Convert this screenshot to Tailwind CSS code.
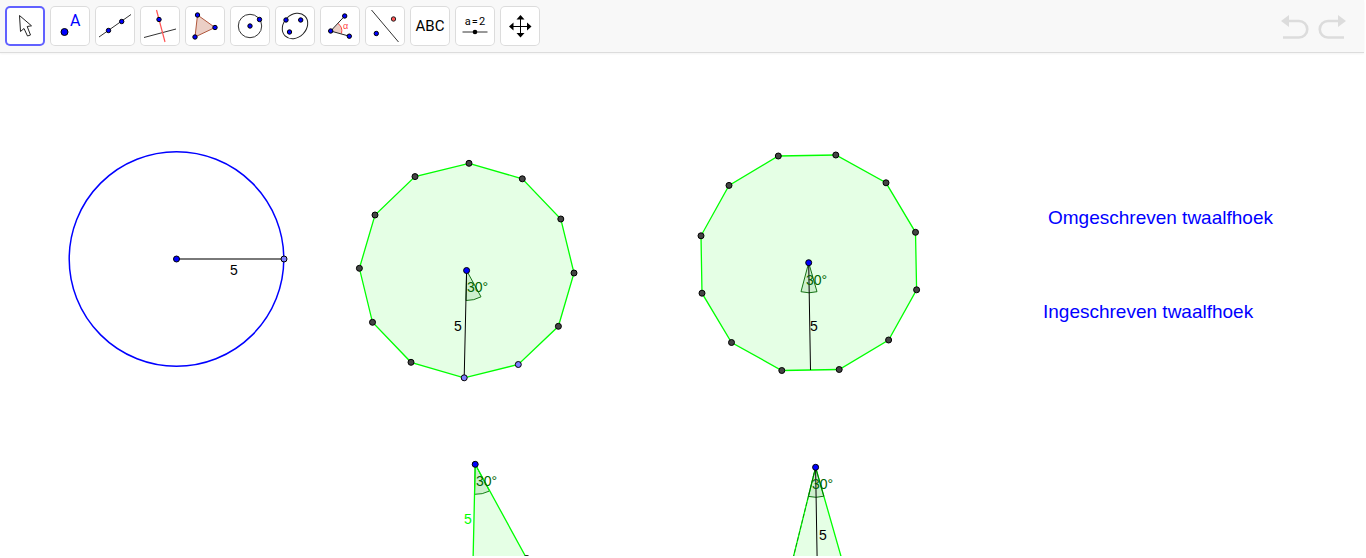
<!DOCTYPE html>
<html lang="nl">
<head>
  <meta charset="UTF-8">
  <meta name="viewport" content="width=device-width, initial-scale=1.0">
  <title>Twaalfhoek</title>
  <script src="https://cdn.jsdelivr.net/npm/@tailwindcss/browser@4"></script>
</head>
<body class="bg-white">
  <div class="flex flex-col h-screen pr-0.5 pb-0.5">

    <!-- Toolbar -->
    <header class="flex items-center justify-between shrink-0 bg-[#f8f8f8] border-b border-[#dcdcdc] shadow-xs pl-[5px] pr-4 py-1.5">
      <div class="flex gap-[5px]">
        <button aria-label="Move" class="size-10 rounded-[5px] bg-white inset-ring-2 inset-ring-[#6161ff]">
          <svg class="size-10" viewBox="0 0 40 40">
            <path d="M14.5 9.5L15.5 25.5L19 22.5L22.5 30L25.5 29L22.2 20.5L26.5 19.8z" fill="#fff" stroke="#222"/>
          </svg>
        </button>
        <button aria-label="Point" class="size-10 rounded-[5px] bg-white inset-ring inset-ring-[#dcdcdc]">
          <svg class="size-10" viewBox="0 0 40 40">
            <circle cx="14.5" cy="26" r="3.5" fill="#00f" stroke="#000"/>
            <text x="20" y="20" class="font-[Roboto,sans-serif] text-[16px]" fill="#00f">A</text>
          </svg>
        </button>
        <button aria-label="Line" class="size-10 rounded-[5px] bg-white inset-ring inset-ring-[#dcdcdc]">
          <svg class="size-10" viewBox="0 0 40 40">
            <path d="M4 31L36 8.5" stroke="#333"/>
            <g fill="#00f" stroke="#000"><circle cx="13.5" cy="24.5" r="2.2"/><circle cx="26.7" cy="15.5" r="2.2"/></g>
          </svg>
        </button>
        <button aria-label="Perpendicular line" class="size-10 rounded-[5px] bg-white inset-ring inset-ring-[#dcdcdc]">
          <svg class="size-10" viewBox="0 0 40 40">
            <path d="M4 31.5L36 23" stroke="#333"/>
            <path d="M16.5 4L25 36" stroke="#f55" stroke-width="1.2"/>
            <circle cx="19" cy="13.5" r="2.2" fill="#00f" stroke="#000"/>
          </svg>
        </button>
        <button aria-label="Polygon" class="size-10 rounded-[5px] bg-white inset-ring inset-ring-[#dcdcdc]">
          <svg class="size-10" viewBox="0 0 40 40">
            <path d="M12.5 9L30 21.5L10 31z" fill="#ebcfc6" stroke="#b0573c"/>
            <g fill="#00f" stroke="#000"><circle cx="12.5" cy="9" r="2.2"/><circle cx="30" cy="21.5" r="2.2"/><circle cx="10" cy="31" r="2.2"/></g>
          </svg>
        </button>
        <button aria-label="Circle" class="size-10 rounded-[5px] bg-white inset-ring inset-ring-[#dcdcdc]">
          <svg class="size-10" viewBox="0 0 40 40">
            <circle cx="20" cy="20" r="11.7" fill="none" stroke="#333"/>
            <g fill="#00f" stroke="#000"><circle cx="20" cy="20" r="2.2"/><circle cx="29.5" cy="13.5" r="2.2"/></g>
          </svg>
        </button>
        <button aria-label="Ellipse" class="size-10 rounded-[5px] bg-white inset-ring inset-ring-[#dcdcdc]">
          <svg class="size-10" viewBox="0 0 40 40">
            <ellipse cx="20" cy="20" rx="14" ry="11.3" transform="rotate(-45 20 20)" fill="none" stroke="#222"/>
            <g fill="#00f" stroke="#000"><circle cx="11" cy="14" r="2.2"/><circle cx="25.7" cy="14" r="2.2"/><circle cx="14.5" cy="26" r="2.2"/></g>
          </svg>
        </button>
        <button aria-label="Angle" class="size-10 rounded-[5px] bg-white inset-ring inset-ring-[#dcdcdc]">
          <svg class="size-10" viewBox="0 0 40 40">
            <path d="M11 25L18 17.5Q23 21 21.5 27.5z" fill="#ebcfc6"/>
            <path d="M18 17.5Q23 21 21.5 27.5" fill="none" stroke="#f44"/>
            <path d="M24.7 10L10.7 25L29.3 30.2" fill="none" stroke="#222"/>
            <g fill="#00f" stroke="#000"><circle cx="24.7" cy="10" r="2.2"/><circle cx="10.7" cy="25" r="2.2"/><circle cx="29.3" cy="30.2" r="2.2"/></g>
            <text x="23" y="23" class="font-['Liberation_Sans',sans-serif] text-[9px]" fill="#f44">α</text>
          </svg>
        </button>
        <button aria-label="Reflect" class="size-10 rounded-[5px] bg-white inset-ring inset-ring-[#dcdcdc]">
          <svg class="size-10" viewBox="0 0 40 40">
            <path d="M6.5 4L33.5 36" stroke="#333"/>
            <circle cx="28.5" cy="13" r="2.2" fill="#f55" stroke="#222"/>
            <circle cx="11.3" cy="27.5" r="2.2" fill="#00f" stroke="#000"/>
          </svg>
        </button>
        <button aria-label="Text" class="size-10 rounded-[5px] bg-white inset-ring inset-ring-[#dcdcdc]">
          <svg class="size-10" viewBox="0 0 40 40">
            <text x="20" y="25" text-anchor="middle" class="font-[Roboto,sans-serif] text-[15px]">ABC</text>
          </svg>
        </button>
        <button aria-label="Slider" class="size-10 rounded-[5px] bg-white inset-ring inset-ring-[#dcdcdc]">
          <svg class="size-10" viewBox="0 0 40 40">
            <text x="20" y="19" text-anchor="middle" class="font-[Roboto,sans-serif] text-[11px]">a&#8202;=&#8202;2</text>
            <path d="M7.5 26H32.5" stroke="#333"/>
            <circle cx="20" cy="26" r="2.3"/>
          </svg>
        </button>
        <button aria-label="Move graphics view" class="size-10 rounded-[5px] bg-white inset-ring inset-ring-[#dcdcdc]">
          <svg class="size-10" viewBox="0 0 40 40">
            <path d="M20.5 12V29M12 20.5H29" stroke="#000"/>
            <path d="M20.5 9l4 4.500h-8zM20.5 31.5l4-4.500h-8zM9 20.5l4.500-4v8zM31.5 20.5l-4.500-4v8z"/>
          </svg>
        </button>
      </div>

      <div class="flex gap-1">
        <button aria-label="Undo" class="w-8 h-10">
          <svg class="w-8 h-10" viewBox="0 0 32 40">
            <path d="M6 15H19a8.200 8.200 0 0 1 0 16.500H3" fill="none" stroke="#dcdcdc" stroke-width="2.600"/>
            <path d="M1 15l8-6v12z" fill="#dcdcdc"/>
          </svg>
        </button>
        <button aria-label="Redo" class="w-8 h-10">
          <svg class="w-8 h-10" viewBox="0 0 32 40">
            <path d="M24 15H12a8.200 8.200 0 0 0 0 16.500H28" fill="none" stroke="#dcdcdc" stroke-width="2.600"/>
            <path d="M30 15l-8-6v12z" fill="#dcdcdc"/>
          </svg>
        </button>
      </div>
    </header>

    <!-- Graphics view -->
    <main class="flex-1 min-h-0 overflow-hidden">
      <svg class="w-full h-full font-['Liberation_Sans',sans-serif] text-[14px]">
        <g transform="translate(0 -53)">

          <!-- Circle with radius 5 -->
          <circle cx="176.5" cy="259" r="107.3" fill="none" stroke="#00f" stroke-width="1.5"/>
          <path d="M176.5 259H284" stroke="#000" stroke-opacity=".7" stroke-width="1.3"/>
          <text x="230" y="275">5</text>
          <g stroke="#000">
            <circle cx="176.5" cy="259" r="3" fill="#00f"/>
            <circle cx="284" cy="259" r="3" fill="#7d7dff"/>
          </g>

          <!-- Inscribed dodecagon -->
          <polygon points="469,163.3 522.3,178.8 560.8,219 574,273 558.4,326.3 518.3,364.5 464.2,377.8 411,362.3 372.5,322.3 359.4,268.3 375,215 415,176.6" fill="#0f0" fill-opacity=".1" stroke="#0f0" stroke-width="1.3"/>
          <path d="M466.6 270.5L466 300.5A30 30 0 0 0 481 296.8z" fill="#006400" fill-opacity=".1" stroke="#006400" stroke-opacity=".9"/>
          <path d="M466.6 270.5L464.2 377.8" stroke="#000"/>
          <text x="467" y="292" fill="#006400">30°</text>
          <text x="454" y="331">5</text>
          <g fill="#444" stroke="#000">
            <circle cx="469" cy="163.3" r="3"/>
            <circle cx="522.3" cy="178.8" r="3"/>
            <circle cx="560.8" cy="219" r="3"/>
            <circle cx="574" cy="273" r="3"/>
            <circle cx="558.4" cy="326.3" r="3"/>
            <circle cx="411" cy="362.3" r="3"/>
            <circle cx="372.5" cy="322.3" r="3"/>
            <circle cx="359.4" cy="268.3" r="3"/>
            <circle cx="375" cy="215" r="3"/>
            <circle cx="415" cy="176.6" r="3"/>
            <circle cx="518.3" cy="364.5" r="3" fill="#7d7dff"/>
            <circle cx="464.2" cy="377.8" r="3" fill="#7d7dff"/>
            <circle cx="466.6" cy="270.5" r="3" fill="#00f"/>
          </g>

          <!-- Circumscribed dodecagon -->
          <polygon points="778.3,156 835.8,155 886,182.8 915.5,232.3 916.6,289.8 888.6,340 839.2,369.5 781.8,370.5 731.5,342.5 702,293.2 701,235.8 729,185.4" fill="#0f0" fill-opacity=".1" stroke="#0f0" stroke-width="1.3"/>
          <path d="M808.7 262.7L801 291.7A30 30 0 0 0 817 291.7z" fill="#006400" fill-opacity=".1" stroke="#006400" stroke-opacity=".9"/>
          <path d="M808.7 262.7L810.5 370" stroke="#000"/>
          <text x="806" y="285" fill="#006400">30°</text>
          <text x="810" y="331">5</text>
          <g fill="#444" stroke="#000">
            <circle cx="778.3" cy="156" r="3"/>
            <circle cx="835.8" cy="155" r="3"/>
            <circle cx="886" cy="182.8" r="3"/>
            <circle cx="915.5" cy="232.3" r="3"/>
            <circle cx="916.6" cy="289.8" r="3"/>
            <circle cx="888.6" cy="340" r="3"/>
            <circle cx="839.2" cy="369.5" r="3"/>
            <circle cx="781.8" cy="370.5" r="3"/>
            <circle cx="731.5" cy="342.5" r="3"/>
            <circle cx="702" cy="293.2" r="3"/>
            <circle cx="701" cy="235.8" r="3"/>
            <circle cx="729" cy="185.4" r="3"/>
            <circle cx="808.7" cy="262.7" r="3" fill="#00f"/>
          </g>

          <!-- One triangle of the inscribed polygon -->
          <path d="M475.2 464.3L474.5 494.3A30 30 0 0 0 489.5 491z" fill="#006400" fill-opacity=".1" stroke="#006400" stroke-opacity=".9"/>
          <polygon points="475.2,464.3 472.8,571.8 526.7,558.5" fill="#0f0" fill-opacity=".1" stroke="#0f0" stroke-width="1.3"/>
          <text x="476" y="486" fill="#006400">30°</text>
          <text x="464" y="524" fill="#0f0">5</text>
          <g stroke="#000">
            <circle cx="475.2" cy="464.3" r="3" fill="#00f"/>
            <circle cx="526.7" cy="558.5" r="3" fill="#444"/>
          </g>

          <!-- One triangle of the circumscribed polygon -->
          <polygon points="815.6,467.3 788.8,575.5 846.2,574.5" fill="#0f0" fill-opacity=".1" stroke="#0f0" stroke-width="1.3"/>
          <path d="M815.6 467.3L788.8 575.5" stroke="#006400" stroke-opacity=".6" stroke-dasharray="4 2"/>
          <path d="M815.6 467.3L808.4 496.4A30 30 0 0 0 823.8 496.2z" fill="#006400" fill-opacity=".1" stroke="#006400" stroke-opacity=".9"/>
          <path d="M815.6 467.3L817.4 575" stroke="#000"/>
          <text x="812" y="489" fill="#006400">30°</text>
          <text x="819" y="540">5</text>
          <circle cx="815.6" cy="467.3" r="3" fill="#00f" stroke="#000"/>

          <!-- Captions -->
          <g class="text-[19px]" fill="#00f">
            <text x="1048" y="224">Omgeschreven twaalfhoek</text>
            <text x="1043" y="318">Ingeschreven twaalfhoek</text>
          </g>
        </g>
      </svg>
    </main>
  </div>
</body>
</html>
